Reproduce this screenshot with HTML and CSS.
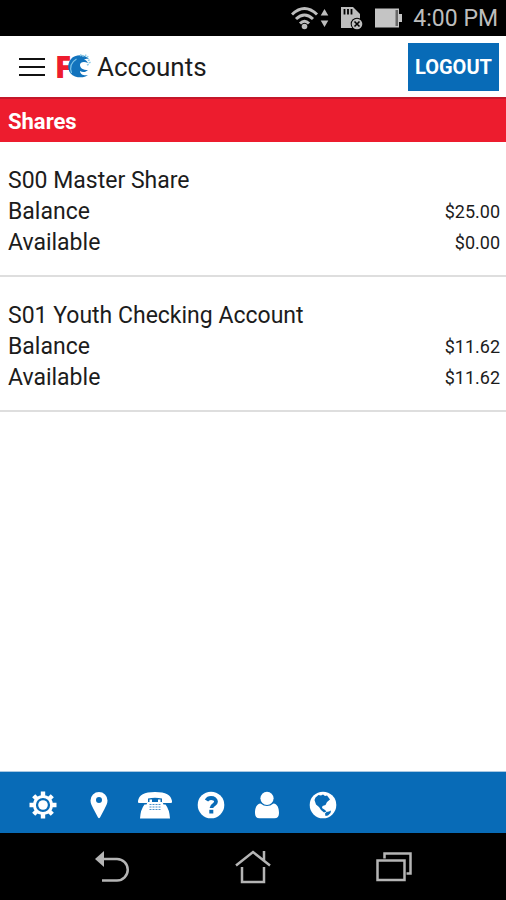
FILE: index.html
```html
<!DOCTYPE html>
<html lang="en">
<head>
<meta charset="utf-8">
<meta name="viewport" content="width=device-width, initial-scale=1">
<title>Accounts</title>
<link rel="stylesheet" href="styles.css">
</head>
<body>
<div class="status">
  <svg width="38" height="24" viewBox="0 0 38 24" aria-hidden="true">
    <g fill="none" stroke="#bdbdbd" stroke-width="3"><path d="M1 8.500Q13.500-3.500 26 8.500"/><path d="M5 13q8.500-8 17 0"/><path d="M9 17.500q4.500-4.500 9 0"/></g>
    <circle cx="13.500" cy="20.500" r="2.800" fill="#bdbdbd"/>
    <path d="M33.500 3l3.800 6.500h-7.600zM33.500 21l3.800-6.500h-7.600z" fill="#bdbdbd"/>
  </svg>
  <svg width="23" height="24" viewBox="0 0 23 24" aria-hidden="true">
    <path d="M1 1h12l7 7v14H1z" fill="#bdbdbd"/>
    <path d="M4.500 3v5.500M8 3v5.500M11.500 3v5.500" stroke="#000" stroke-width="1.800"/>
    <circle cx="17" cy="18" r="6.300" fill="#000"/><circle cx="17" cy="18" r="5.300" fill="#bdbdbd"/>
    <path d="M14.500 15.500l5 5M19.500 15.500l-5 5" stroke="#000" stroke-width="1.600"/>
  </svg>
  <svg width="28" height="24" viewBox="0 0 28 24" aria-hidden="true">
    <path d="M1 2.500h24V8h3v8h-3v5.500H1z" fill="#c4c4c4"/><path d="M21.500 4H24v16h-2.500z" fill="#666"/>
  </svg>
  <time>4:00 PM</time>
</div>
<header class="header">
  <button aria-label="Menu">
    <svg width="26" height="20" viewBox="0 0 26 20"><path d="M0 2h26M0 10h26M0 18h26" stroke="#111" stroke-width="2"/></svg>
  </button>
  <svg class="logo" width="40" height="44" viewBox="-4 -7 40 44" aria-hidden="true">
    <text class="logo-letter" x="-2" y="26">F</text>
    <path d="M32 7C28 2 18 2 14 7c-5 6-3 15 4 17.500 5 1.500 10 1 13-1.500-4 1-8-.5-8-4 3 2 6 1 8-1-5 0-8-2-8-5s4-4 8-2c-1-2-2-3-4-3.500 2-.5 3-1 5-.5z" fill="#1273bd"/>
    <path d="M14.500 21c-2-6 0-11 5-14" fill="none" stroke="#7cc4e8" stroke-width="1.200"/>
    <path d="M23 3l5 1.500M28 3l4 3M31.500 7.500l1.500 4M30.500 12l1 2" fill="none" stroke="#8dcbe6" stroke-width="2" stroke-dasharray="1.500 1"/>
  </svg>
  <h1>Accounts</h1>
  <button class="logout">LOGOUT</button>
</header>
<main>
  <h2>Shares</h2>
  <section class="account">
    <h3>S00 Master Share</h3>
    <dl>
      <div><dt>Balance</dt><dd>$25.00</dd></div>
      <div><dt>Available</dt><dd>$0.00</dd></div>
    </dl>
  </section>
  <section class="account">
    <h3>S01 Youth Checking Account</h3>
    <dl>
      <div><dt>Balance</dt><dd>$11.62</dd></div>
      <div><dt>Available</dt><dd>$11.62</dd></div>
    </dl>
  </section>
</main>
<nav class="toolbar" aria-label="Tools">
  <button aria-label="Settings"><svg width="28" height="28" viewBox="0 0 28 28">
    <circle cx="14" cy="14" r="8.600" fill="none" stroke="#fff" stroke-width="3"/><circle cx="14" cy="14" r="4.800" fill="#fff"/>
    <g stroke="#fff" stroke-width="4.400"><path d="M14 .5v5M14 22.500v5M.5 14h5M22.500 14h5"/><path d="M4.700 4.700l3.300 3.300M20 20l3.300 3.300M4.700 23.300L8 20M20 8l3.300-3.300"/></g>
  </svg></button>
  <button aria-label="Locations"><svg width="28" height="28" viewBox="0 0 28 28">
    <path fill="#fff" fill-rule="evenodd" d="M14 1a8.500 8.500 0 0 0-8.500 8.500c0 3 1.500 5.500 3 8.500L13 26.500q1 1.500 2 0L19.500 18c1.500-3 3-5.500 3-8.500A8.500 8.500 0 0 0 14 1zm0 5a3 3 0 1 1 0 6 3 3 0 0 1 0-6z"/>
  </svg></button>
  <button aria-label="Call"><svg width="34" height="28" viewBox="0 0 34 28">
    <path fill="#fff" d="M0 10C1 4 6 1 17 1s16 3 17 9v1q0 1-1 1h-8q-1 0-1-1V7.500Q17 6 10 7.500V11q0 1-1 1H1q-1 0-1-1z"/>
    <path fill="#fff" d="M11.500 8.500h2.500V11h6V8.500h2.500V11h2l1 2.500h2q4 5 4.500 14H2q.5-9 4.500-14h2l1-2.500h2z"/>
    <path d="M11.500 13.500h11M11.500 16h11M11.500 18.500h11" stroke="#4b91ca" stroke-dasharray="2 1"/>
  </svg></button>
  <button aria-label="Help"><svg width="28" height="28" viewBox="0 0 28 28">
    <circle cx="14" cy="14" r="13.300" fill="#fff"/>
    <path d="M9.500 9.500Q11 7 14 7c3 0 5 1.500 5 3.800 0 3.200-4.500 2.700-4.500 6.200" fill="none" stroke="#086bb7" stroke-width="3.800"/><path d="M12.300 18.800h4v3.700h-4z" fill="#086bb7"/>
  </svg></button>
  <button aria-label="Profile"><svg width="28" height="28" viewBox="0 0 28 28">
    <circle cx="14" cy="7.300" r="6.600" fill="#fff"/><path fill="#fff" d="M7.500 12.500q6.500 5 13 0c4 .5 5.500 4.500 5.500 9.500 0 3.500-1.500 5.300-4.500 5.300h-15C3.500 27.300 2 25.500 2 22c0-5 1.500-9 5.500-9.500z"/>
  </svg></button>
  <button aria-label="Website"><svg width="28" height="28" viewBox="0 0 28 28">
    <circle cx="14" cy="14" r="13.300" fill="#fff"/>
    <path fill="#086bb7" d="M6.500 6.500l3-2.500 2.500.5L14 3.500l2 1.500 2-.5 3 4-3 2.500-1.500 3-3 1-.5 2 3 2 1.500 1.500-2.500 1-3-2.500-2-3-3-2.500L5.500 9zM16 22.500l1.500-1.500 2.500-.5 2-1-.5 2.500-2.500 2.500-2.500.500z"/>
  </svg></button>
</nav>
<nav class="system" aria-label="System">
  <button aria-label="Back"><svg width="36" height="34" viewBox="0 0 36 34"><path d="M9 9h14a10.500 10.500 0 0 1 0 21.500H8" fill="none" stroke="#b5b5b5" stroke-width="2.500"/><path d="M1 9l9-8v16z" fill="#b5b5b5"/></svg></button>
  <button aria-label="Home"><svg width="36" height="34" viewBox="0 0 36 34"><path d="M1 15.500L18 2l17 13.500M29 10V1M7 17v15h22V17" fill="none" stroke="#b5b5b5" stroke-width="2.500"/></svg></button>
  <button aria-label="Recent apps"><svg width="36" height="34" viewBox="0 0 36 34"><path d="M1.500 10.500h27V30h-27zM8.500 8.500V3.500h26v20h-4" fill="none" stroke="#b5b5b5" stroke-width="2.500"/></svg></button>
</nav>
</body>
</html>
```
FILE: styles.css
```css
* { box-sizing: border-box; }
body {
  margin: 0;
  min-height: 100vh;
  display: flex;
  flex-direction: column;
  background: #fff;
  color: #1c1c1c;
  font-family: Roboto, "Liberation Sans", sans-serif;
  font-size: 23px;
}
h1, h2, h3, dl, dd { margin: 0; font-weight: 400; }
button { border: 0; padding: 0; background: none; font: inherit; cursor: pointer; }
svg { display: block; }

.status {
  display: flex;
  align-items: center;
  justify-content: flex-end;
  gap: 11px;
  height: 36px;
  padding: 0 8px;
  background: #000;
  color: #bdbdbd;
}
.header {
  display: flex;
  align-items: center;
  height: 61px;
  padding: 0 7px 0 19px;
}
.logo { margin: 0 4px 0 8px; }
.logo-letter { fill: #ed1c2e; font-family: "Open Sans", sans-serif; font-size: 30px; font-weight: 800; }
h1 { font-size: 26px; }
.logout {
  width: 91px;
  height: 48px;
  margin-left: auto;
  background: #086bb7;
  color: #fff;
  font-size: 20px;
  font-weight: 700;
}
main { flex: 1; }
h2 {
  height: 45px;
  padding: 0 8px;
  border-top: 2px solid #c4182a;
  background: #ed1c2e;
  color: #fff;
  font-size: 22px;
  font-weight: 700;
  line-height: 45px;
}
.account {
  padding: 24px 6px 17px 8px;
  border-bottom: 2px solid #dedede;
}
h3 { font-size: 23px; line-height: 30px; }
dl div { display: flex; align-items: center; justify-content: space-between; line-height: 31px; }
dd { font-size: 18px; }

.toolbar {
  display: flex;
  align-items: center;
  height: 62px;
  padding: 4px 15px 0;
  border-top: 1px solid #a9c8e2;
  background: #086bb7;
}
.toolbar button { display: grid; place-items: center; width: 56px; height: 48px; }
.system {
  display: grid;
  grid-template-columns: repeat(3, 1fr);
  place-items: center;
  height: 67px;
  padding: 0 42px;
  background: #000;
}
```
